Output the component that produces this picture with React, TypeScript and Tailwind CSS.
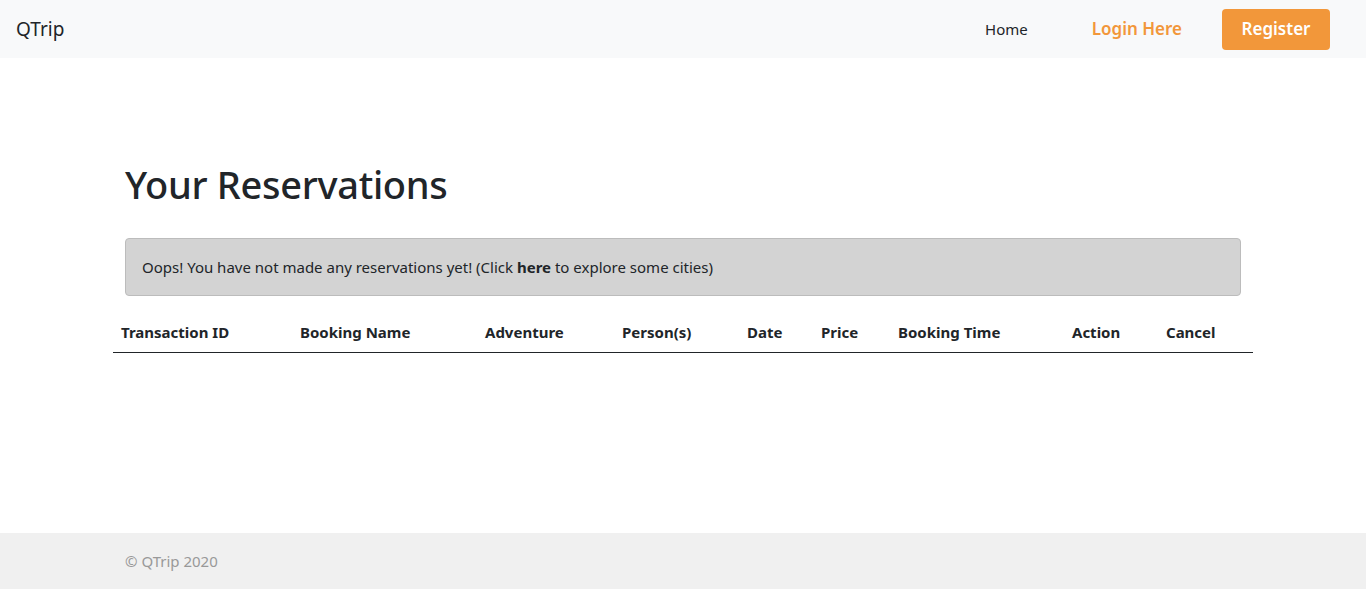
const columns: { label: string; width: string }[] = [
  { label: "Transaction ID", width: "w-[179px]" },
  { label: "Booking Name", width: "w-[185px]" },
  { label: "Adventure", width: "w-[137px]" },
  { label: "Person(s)", width: "w-[125px]" },
  { label: "Date", width: "w-[74px]" },
  { label: "Price", width: "w-[77px]" },
  { label: "Booking Time", width: "w-[174px]" },
  { label: "Action", width: "w-[94px]" },
  { label: "Cancel", width: "w-[95px]" },
];

function Navbar() {
  return (
    <nav className="flex h-[58px] items-center justify-between bg-[#f8f9fa] pr-9 pl-4">
      <a href="#" className="text-[19px] text-[#212529]">
        QTrip
      </a>
      <div className="flex items-center">
        <a href="#" className="mr-16 text-[15px] text-[#212529]">
          Home
        </a>
        <a href="#" className="mr-10 text-[17px] font-semibold text-[#f2973a]">
          Login Here
        </a>
        <button className="h-[41px] w-[108px] rounded bg-[#f2973a] text-[17px] font-semibold text-white">
          Register
        </button>
      </div>
    </nav>
  );
}

export default function App() {
  return (
    <div className="flex min-h-screen flex-col bg-white font-['Noto_Sans',sans-serif] text-[#212529]">
      <Navbar />
      <main className="flex-1">
        <div className="mx-auto w-[1140px] px-3 pt-[102px]">
          <h1 className="text-[38px] leading-[48px] font-medium tracking-[-0.3px]">
            Your Reservations
          </h1>
          <div className="mt-[30px] mb-4 rounded border border-[#bcbcbc] bg-[#d3d3d3] px-4 py-4 text-[15px] leading-6">
            Oops! You have not made any reservations yet! (Click{" "}
            <a href="#" className="font-bold text-[#212529]">
              here
            </a>{" "}
            to explore some cities)
          </div>
          <table className="-mx-3 w-[1140px] table-fixed border-collapse">
            <thead>
              <tr className="border-b border-[#212529]">
                {columns.map((c) => (
                  <th
                    key={c.label}
                    className={`${c.width} px-2 py-2 text-left text-[15px] leading-6 font-bold`}
                  >
                    {c.label}
                  </th>
                ))}
              </tr>
            </thead>
          </table>
        </div>
      </main>
      <footer className="h-14 bg-[#f0f0f0]">
        <div className="mx-auto flex h-full w-[1140px] items-center px-3 text-[15px] text-[#999999]">
          © QTrip 2020
        </div>
      </footer>
    </div>
  );
}
